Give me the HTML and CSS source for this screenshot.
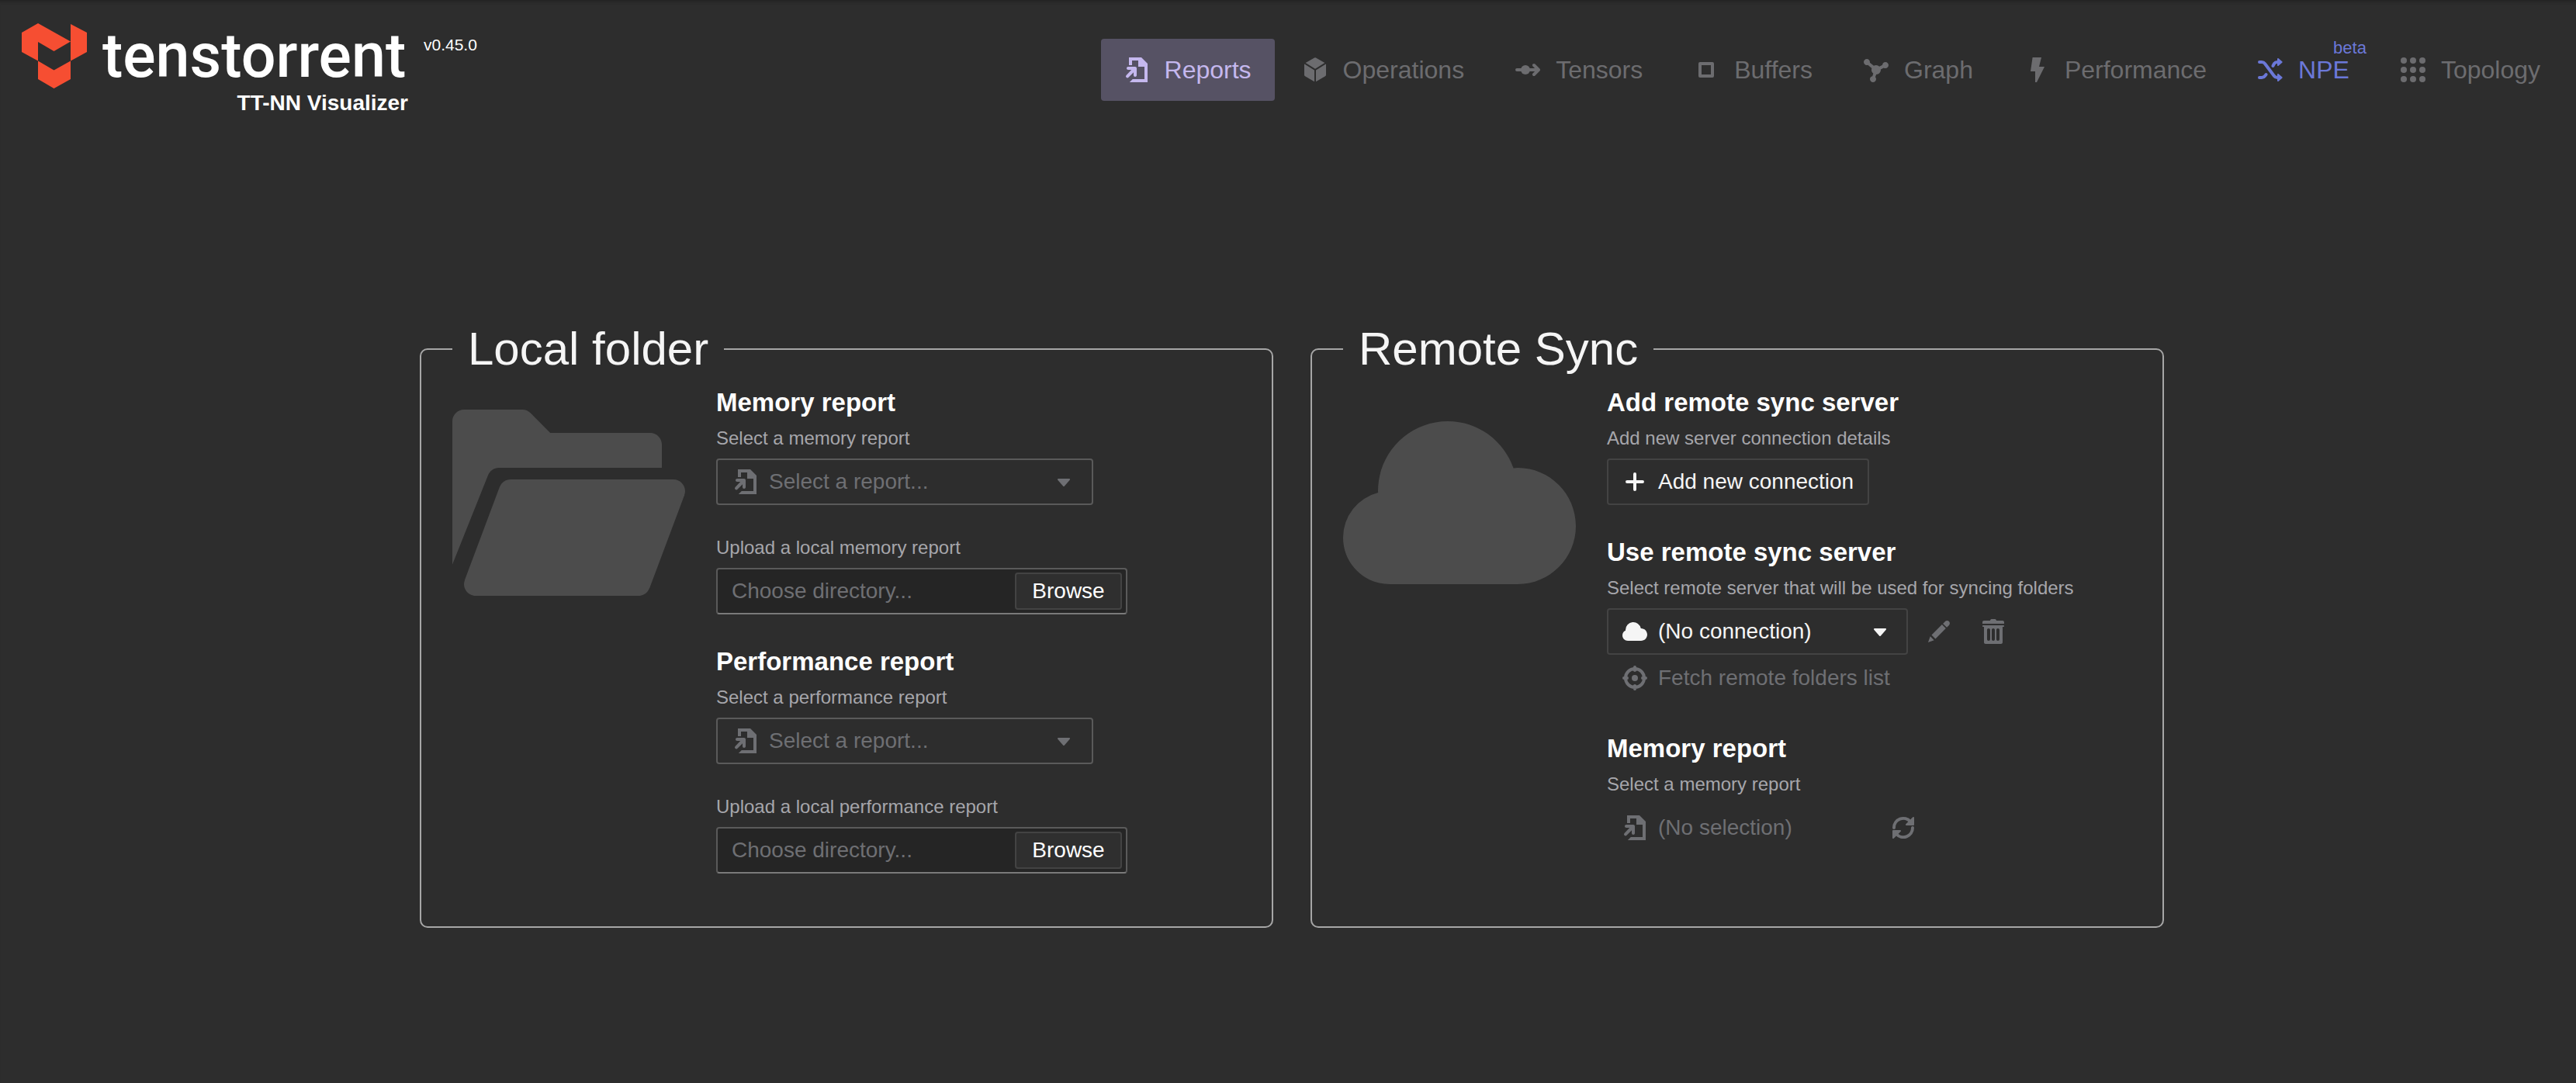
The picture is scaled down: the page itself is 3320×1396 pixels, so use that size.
FILE: index.html
```html
<!DOCTYPE html>
<html lang="en">
<head>
<meta charset="utf-8">
<title>TT-NN Visualizer</title>
<link rel="stylesheet" href="styles.css">
</head>
<body>
<svg class="sprite" aria-hidden="true">
  <symbol id="i-document" viewBox="0 0 16 16"><path d="M3 0h8l4 4v12H3.4l2-2H13V6H9V2H5v3H3z"/><path d="M8 7c0-.55-.45-1-1-1H2.500c-.55 0-1 .45-1 1s.45 1 1 1h2.090L1.300 11.500a1 1 0 0 0 1.420 1.420L6 9.600V11.500c0 .55.45 1 1 1s1-.45 1-1z"/></symbol>
  <symbol id="i-cube" viewBox="0 0 16 16"><path d="M14.194 3.540 8 7.410 1.806 3.540 7.504.283a1 1 0 0 1 .992 0l5.698 3.255zm.708.737a1 1 0 0 1 .098.432v6.582a1 1 0 0 1-.504.868L8.500 15.586V8.277l6.402-4zm-13.804 0 6.402 4v7.309l-5.996-3.427A1 1 0 0 1 1 11.290V4.710a1 1 0 0 1 .098-.433z"/></symbol>
  <symbol id="i-flow" viewBox="0 0 16 16"><circle cx="6.500" cy="8" r="3"/><path d="M1 8h13M12 5l3 3-3 3" fill="none" stroke="currentColor" stroke-width="2" stroke-linecap="round" stroke-linejoin="round"/></symbol>
  <symbol id="i-square" viewBox="0 0 16 16"><path d="M4 4h8v8H4z" fill="none" stroke="currentColor" stroke-width="2" stroke-linejoin="round"/></symbol>
  <symbol id="i-graph" viewBox="0 0 16 16"><path d="M14 3c-1.060 0-1.920.83-1.990 1.880l-1.930.97A2.950 2.950 0 0 0 8 5c-.56 0-1.080.16-1.520.43L3.970 3.340C3.980 3.230 4 3.120 4 3c0-1.100-.9-2-2-2s-2 .9-2 2 .9 2 2 2c.24 0 .47-.05.68-.13l2.510 2.090C5.080 7.290 5 7.640 5 8c0 .96.46 1.810 1.160 2.360l-.56 1.710A2 2 0 0 0 4 14c0 1.100.9 2 2 2s2-.9 2-2c0-.51-.2-.97-.51-1.320l.56-1.700c1.620-.06 2.940-1.340 2.940-2.980 0-.1-.01-.2-.02-.3l1.930-.97c.32.17.69.27 1.100.27 1.100 0 2-.9 2-2s-.9-2-2-2z"/></symbol>
  <symbol id="i-lightning" viewBox="0 0 16 16"><path d="M5.300 0H11L9.500 6H13L8 16H7V9H4z"/></symbol>
  <symbol id="i-random" viewBox="0 0 16 16"><path d="M1 3h1.500c1 0 1.500.3 2 1l6 8c.5.7 1 1 2 1h.5M1 13h1.500c1 0 1.500-.3 2-1l.8-1M9.700 5.500l.8-1.500c.5-.7 1-1 2-1h.5" fill="none" stroke="currentColor" stroke-width="2" stroke-linecap="round" stroke-linejoin="round"/><path d="M13 1l2.300 2L13 5zM13 11l2.300 2-2.300 2z" stroke="currentColor" stroke-linejoin="round"/></symbol>
  <symbol id="i-dots" viewBox="0 0 16 16"><circle cx="2" cy="2" r="2"/><circle cx="8" cy="2" r="2"/><circle cx="14" cy="2" r="2"/><circle cx="2" cy="8" r="2"/><circle cx="8" cy="8" r="2"/><circle cx="14" cy="8" r="2"/><circle cx="2" cy="14" r="2"/><circle cx="8" cy="14" r="2"/><circle cx="14" cy="14" r="2"/></symbol>
  <symbol id="i-caret" viewBox="0 0 16 16"><path d="M12 6.500c0-.28-.22-.5-.5-.5h-7a.495.495 0 0 0-.37.83l3.500 4c.09.1.22.17.37.17s.28-.07.37-.17l3.500-4c.08-.09.13-.2.13-.33z"/></symbol>
  <symbol id="i-plus" viewBox="0 0 16 16"><path d="M8 3v10M3 8h10" fill="none" stroke="currentColor" stroke-width="2" stroke-linecap="round"/></symbol>
  <symbol id="i-cloud" viewBox="0 0 16 16"><path d="M12 6c-.03 0-.07 0-.1.01A5 5 0 0 0 2 7c0 .11.01.22.02.33A3.510 3.510 0 0 0 0 10.500C0 12.430 1.570 14 3.500 14H12c2.210 0 4-1.790 4-4s-1.790-4-4-4z"/></symbol>
  <symbol id="i-edit" viewBox="0 0 16 16"><path d="M3.250 10.260l2.470 2.470 6.690-6.690-2.460-2.480-6.700 6.700zM.99 14.990l3.860-1.390-2.460-2.440-1.400 3.830zm12.250-14c-.48 0-.92.2-1.240.51l-1.440 1.440 2.470 2.470 1.440-1.440c.32-.32.51-.75.51-1.240.01-.95-.77-1.740-1.740-1.740z"/></symbol>
  <symbol id="i-trash" viewBox="0 0 16 16"><path fill-rule="evenodd" d="M14.490 3.990h-13c-.28 0-.5.22-.5.5s.22.5.5.5h.5v10c0 .55.45 1 1 1h10c.55 0 1-.45 1-1v-10h.5c.28 0 .5-.22.5-.5s-.22-.5-.5-.5zm-8.500 9c0 .55-.45 1-1 1s-1-.45-1-1v-6c0-.55.45-1 1-1s1 .45 1 1v6zm3 0c0 .55-.45 1-1 1s-1-.45-1-1v-6c0-.55.45-1 1-1s1 .45 1 1v6zm3 0c0 .55-.45 1-1 1s-1-.45-1-1v-6c0-.55.45-1 1-1s1 .45 1 1v6zm2-12h-4c0-.55-.45-1-1-1h-2c-.55 0-1 .45-1 1h-4c-.55 0-1 .45-1 1v1h14v-1c0-.55-.45-1-1-1z"/></symbol>
  <symbol id="i-locate" viewBox="0 0 16 16"><circle cx="8" cy="8" r="2"/><path d="M8 2a6 6 0 1 0 0 12A6 6 0 0 0 8 2zM8 1v2M8 13v2M1 8h2M13 8h2" fill="none" stroke="currentColor" stroke-width="2" stroke-linecap="round"/></symbol>
  <symbol id="i-refresh" viewBox="0 0 16 16"><path d="M2 8a6 6 0 0 1 10.500-4M14 8a6 6 0 0 1-10.500 4" fill="none" stroke="currentColor" stroke-width="2" stroke-linecap="round"/><path d="M14.500 1.500v4.500H10zM1.500 14.500V10H6z" stroke="currentColor" stroke-linejoin="round"/></symbol>
  <symbol id="i-folder-large" viewBox="0 0 20 20"><path d="M20 9c0-.55-.45-1-1-1H5c-.43 0-.79.27-.93.65h-.01l-3 8h.01c-.04.11-.07.23-.07.35 0 .55.45 1 1 1h14c.43 0 .79-.27.93-.65h.01l3-8h-.01c.04-.11.07-.23.07-.35zM3.070 7.630C3.220 7.260 3.580 7 4 7h14V5c0-.55-.45-1-1-1H8.410l-1.700-1.710A.997.997 0 0 0 6 2H1c-.55 0-1 .45-1 1v12.310l3.070-7.680z"/></symbol>
  <symbol id="i-cloud-large" viewBox="0 0 20 20"><path d="M15 7c-.12 0-.24.03-.36.04C13.830 4.690 11.620 3 9 3 5.690 3 3 5.690 3 9c0 .05.01.09.01.14A3.980 3.980 0 0 0 0 13c0 2.210 1.790 4 4 4h11c2.760 0 5-2.240 5-5s-2.240-5-5-5z"/></symbol>
</svg>

<header class="site-header">
  <a class="brand" href="#">
    <svg class="brand-mark" viewBox="0 0 84 84" aria-hidden="true"><path d="M0 12 21 0l42 23.500L41.500 36 21 24v24.500L0 37zM21 48.500 41.500 60.500 63 48.500V72L41.500 84 21 72zM63 1l21 11v25L63 48.500z"/></svg>
    <span class="brand-name">tenstorrent</span>
    <span class="version">v0.45.0</span>
    <span class="brand-product">TT-NN Visualizer</span>
  </a>
  <nav class="nav">
    <a class="nav-link active" href="#"><svg class="icon"><use href="#i-document"/></svg>Reports</a>
    <a class="nav-link" href="#"><svg class="icon"><use href="#i-cube"/></svg>Operations</a>
    <a class="nav-link" href="#"><svg class="icon"><use href="#i-flow"/></svg>Tensors</a>
    <a class="nav-link" href="#"><svg class="icon"><use href="#i-square"/></svg>Buffers</a>
    <a class="nav-link" href="#"><svg class="icon"><use href="#i-graph"/></svg>Graph</a>
    <a class="nav-link" href="#"><svg class="icon"><use href="#i-lightning"/></svg>Performance</a>
    <a class="nav-link npe" href="#"><svg class="icon"><use href="#i-random"/></svg>NPE<span class="badge">beta</span></a>
    <a class="nav-link" href="#"><svg class="icon"><use href="#i-dots"/></svg>Topology</a>
  </nav>
</header>

<main class="panels">
  <fieldset class="panel">
    <legend>Local folder</legend>
    <div class="panel-body">
      <svg class="panel-icon" aria-hidden="true"><use href="#i-folder-large"/></svg>
      <div class="sections">
        <section>
          <h3>Memory report</h3>
          <div class="group">
            <label for="mem-report">Select a memory report</label>
            <div class="select outlined report">
              <svg class="icon lead"><use href="#i-document"/></svg>
              <select id="mem-report" disabled><option>Select a report...</option></select>
              <svg class="icon caret"><use href="#i-caret"/></svg>
            </div>
          </div>
          <div class="group">
            <label for="mem-upload">Upload a local memory report</label>
            <div class="upload">
              <input id="mem-upload" type="text" placeholder="Choose directory..." readonly>
              <button type="button" class="browse">Browse</button>
            </div>
          </div>
        </section>
        <section>
          <h3>Performance report</h3>
          <div class="group">
            <label for="perf-report">Select a performance report</label>
            <div class="select outlined report">
              <svg class="icon lead"><use href="#i-document"/></svg>
              <select id="perf-report" disabled><option>Select a report...</option></select>
              <svg class="icon caret"><use href="#i-caret"/></svg>
            </div>
          </div>
          <div class="group">
            <label for="perf-upload">Upload a local performance report</label>
            <div class="upload">
              <input id="perf-upload" type="text" placeholder="Choose directory..." readonly>
              <button type="button" class="browse">Browse</button>
            </div>
          </div>
        </section>
      </div>
    </div>
  </fieldset>

  <fieldset class="panel">
    <legend>Remote Sync</legend>
    <div class="panel-body">
      <svg class="panel-icon" aria-hidden="true"><use href="#i-cloud-large"/></svg>
      <div class="sections">
        <section>
          <h3>Add remote sync server</h3>
          <div class="group">
            <label for="add-connection">Add new server connection details</label>
            <button type="button" id="add-connection" class="button bordered"><svg class="icon"><use href="#i-plus"/></svg>Add new connection</button>
          </div>
        </section>
        <section>
          <h3>Use remote sync server</h3>
          <div class="group">
            <label for="connection">Select remote server that will be used for syncing folders</label>
            <div class="row">
              <div class="select connection">
                <svg class="icon lead"><use href="#i-cloud"/></svg>
                <select id="connection"><option>(No connection)</option></select>
                <svg class="icon caret"><use href="#i-caret"/></svg>
              </div>
              <button type="button" class="button square" aria-label="Edit selected connection" disabled><svg class="icon"><use href="#i-edit"/></svg></button>
              <button type="button" class="button square" aria-label="Remove selected connection" disabled><svg class="icon"><use href="#i-trash"/></svg></button>
            </div>
            <button type="button" class="button" disabled><svg class="icon"><use href="#i-locate"/></svg>Fetch remote folders list</button>
          </div>
        </section>
        <section>
          <h3>Memory report</h3>
          <div class="group">
            <label for="remote-report">Select a memory report</label>
            <div class="row">
              <div class="select bare">
                <svg class="icon lead"><use href="#i-document"/></svg>
                <select id="remote-report" disabled><option>(No selection)</option></select>
              </div>
              <button type="button" class="button square" aria-label="Sync remote folder" disabled><svg class="icon"><use href="#i-refresh"/></svg></button>
            </div>
          </div>
        </section>
      </div>
    </div>
  </fieldset>
</main>
</body>
</html>
```
FILE: styles.css
```css
:root {
  --bg: #2d2d2d;
  --text: #f5f5f5;
  --muted: #a6a6ab;
  --disabled: #6e6f73;
  --line: #5a5a5a;
  --line-soft: #434343;
}

* {
  box-sizing: border-box;
}

body {
  margin: 0;
  min-height: 100vh;
  background: var(--bg);
  box-shadow: inset 0 6px 4px -4px #222;
  color: var(--text);
  font: 28px/36px "Liberation Sans", Arial, sans-serif;
}

.sprite {
  display: none;
}

.icon {
  flex: none;
  width: 32px;
  height: 32px;
  fill: currentColor;
}

/* Header */

.site-header {
  display: flex;
  justify-content: space-between;
  align-items: flex-start;
  padding: 30px 16px 0 28px;
}

.brand {
  display: grid;
  grid-template-columns: 84px minmax(394px, auto) auto;
  column-gap: 20px;
  color: #fff;
  text-decoration: none;
}

.brand-mark {
  width: 84px;
  height: 84px;
  fill: #f64e32;
}

.brand-name {
  font: 500 79px/84px Roboto, sans-serif;
}

.version {
  padding-top: 16px;
  font-size: 21px;
  line-height: 24px;
}

.brand-product {
  grid-column: 1 / 3;
  padding-top: 3px;
  font-weight: bold;
  line-height: 32px;
  text-align: right;
}

.nav {
  display: flex;
  gap: 6px;
  padding-top: 20px;
}

.nav-link {
  position: relative;
  display: flex;
  align-items: center;
  gap: 20px;
  height: 80px;
  padding: 0 30px;
  border-radius: 4px;
  color: #6c6c6f;
  font-size: 32px;
  text-decoration: none;
}

.nav-link.active {
  background: #565264;
  color: #c5b8ee;
}

.nav-link.npe {
  color: #6b78d8;
}

.badge {
  position: absolute;
  top: 0;
  right: 8px;
  font-size: 22px;
  line-height: 24px;
}

/* Panels */

.panels {
  display: grid;
  grid-template-columns: repeat(2, minmax(0, 1100px));
  justify-content: center;
  gap: 48px;
  padding: 267px 20px 40px 30px;
}

.panel {
  min-width: 0;
  margin: 0;
  padding: 14px 40px 68px;
  border: 2px solid #a6a6a6;
  border-radius: 10px;
}

legend {
  padding: 0 20px;
  font-size: 60px;
  line-height: 68px;
}

.panel-body {
  display: flex;
  gap: 40px;
}

.panel-icon {
  flex: none;
  width: 300px;
  height: 300px;
  fill: #4c4c4c;
}

.sections {
  display: flex;
  flex: 1;
  flex-direction: column;
  gap: 40px;
  min-width: 0;
}

h3 {
  margin: 0 0 11px;
  color: #fff;
  font-size: 33px;
  line-height: 42px;
}

.group + .group {
  margin-top: 41px;
}

label {
  display: block;
  margin-bottom: 12px;
  color: var(--muted);
  font-size: 24px;
  line-height: 28px;
}

/* Controls */

.row {
  display: flex;
  gap: 10px;
}

.button,
.browse,
select,
input {
  margin: 0;
  border: 0;
  border-radius: 4px;
  background: none;
  color: var(--text);
  font: inherit;
}

.button {
  display: flex;
  align-items: center;
  gap: 14px;
  height: 60px;
  padding: 0 20px;
}

.button.bordered {
  box-shadow: inset 0 0 0 2px var(--line-soft);
}

.button.square {
  justify-content: center;
  width: 60px;
  padding: 0;
}

.button:disabled,
select:disabled {
  color: var(--disabled);
  opacity: 1;
}

.select {
  position: relative;
  max-width: 100%;
}

.select select {
  width: 100%;
  height: 60px;
  padding: 0 54px 0 64px;
  appearance: none;
  border: 2px solid transparent;
}

.select .icon {
  position: absolute;
  top: 14px;
  pointer-events: none;
}

.select .lead {
  left: 20px;
}

.select .caret {
  right: 20px;
}

.select:has(select:disabled) {
  color: var(--disabled);
}

.report {
  width: 486px;
}

.select.outlined select {
  padding-left: 66px;
  border-color: var(--line);
}

.outlined .lead,
.outlined .caret {
  margin: 0 2px;
}

.connection {
  width: 388px;
}

.select.connection select {
  border-color: var(--line-soft);
}

.bare {
  width: 342px;
}

.upload {
  display: flex;
  align-items: center;
  width: 530px;
  max-width: 100%;
  height: 60px;
  padding: 0 5px 0 18px;
  border: 2px solid var(--line);
  border-bottom-color: #7a7a7a;
  border-radius: 4px;
  background: #252525;
}

.upload input {
  flex: 1;
  min-width: 0;
  padding: 0;
}

.upload input::placeholder {
  color: var(--disabled);
  opacity: 1;
}

.browse {
  width: 138px;
  height: 48px;
  padding: 0;
  background: #2f2f2f;
  box-shadow: inset 0 0 0 2px var(--line-soft);
  color: #fff;
}
```
